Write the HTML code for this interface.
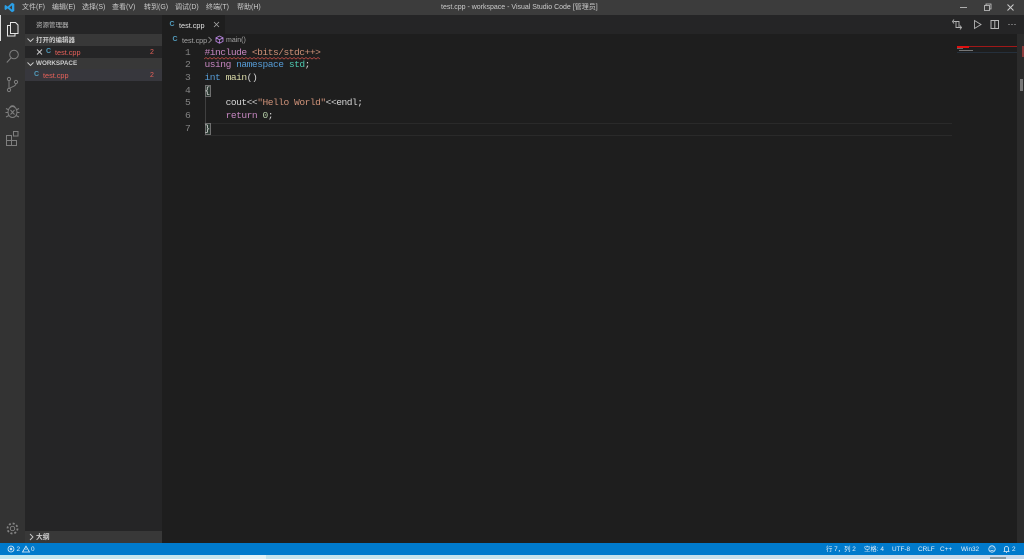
<!DOCTYPE html>
<html><head><meta charset="utf-8">
<style>
*{box-sizing:border-box}
html,body{margin:0;padding:0;width:1024px;height:559px;overflow:hidden;background:#1e1e1e;font-family:"Liberation Sans","Noto Sans CJK SC",sans-serif}
#w{position:absolute;left:0;top:0;width:1024px;height:559px;overflow:hidden;filter:blur(.35px)}
.a{position:absolute;white-space:nowrap}
.code{font-family:"Liberation Mono","DejaVu Sans Mono",monospace;font-size:9.6px;letter-spacing:-.49px;line-height:12.7px;color:#d4d4d4;left:204.5px}
.ln{font-family:"Liberation Mono",monospace;font-size:9.6px;letter-spacing:-.49px;line-height:12.7px;color:#858585;left:185px}
.menu{top:3px;font-size:7px;line-height:9px;color:#ccc}
.st{top:545px;font-size:6.4px;line-height:9px;color:#e4f0fa}
.ci{font-size:7px;line-height:10px;color:#519aba;font-weight:bold}
</style></head><body><div id="w">
<!-- title bar -->
<div class="a" style="left:0;top:0;width:1024px;height:15px;background:#3c3c3c"></div>
<svg class="a" style="left:4px;top:2px" width="11" height="11" viewBox="0 0 11 11"><path d="M8 .8 10.3 2v7L8 10.2 3.6 6.4 1.6 8 .6 7.4V3.6l1-.6 2 1.6zM8 3.4 5.4 5.500 8 7.600z" fill="#2b9fe6"/></svg>
<div class="a menu" style="left:22px">文件(F)</div>
<div class="a menu" style="left:52px">编辑(E)</div>
<div class="a menu" style="left:82px">选择(S)</div>
<div class="a menu" style="left:112px">查看(V)</div>
<div class="a menu" style="left:144px">转到(G)</div>
<div class="a menu" style="left:175px">调试(D)</div>
<div class="a menu" style="left:206px">终端(T)</div>
<div class="a menu" style="left:237px">帮助(H)</div>
<div class="a" style="left:441px;top:3px;font-size:7px;line-height:9px;color:#ccc">test.cpp - workspace - Visual Studio Code [管理员]</div>
<svg class="a" style="left:955px;top:0" width="69" height="15" viewBox="0 0 69 15" fill="none" stroke="#ccc" stroke-width=".8"><path d="M5 7.500h7"/><path d="M29.500 5.500h5v5h-5zM31 5.500V4h5v5h-1.500"/><path d="M52.500 4.500l6 6M58.500 4.500l-6 6" stroke-width="1"/></svg>
<!-- activity bar -->
<div class="a" style="left:0;top:15px;width:25px;height:528px;background:#333"></div>
<div class="a" style="left:0;top:15px;width:1px;height:26px;background:#ddd"></div>
<svg class="a" style="left:0;top:15px" width="25" height="140" viewBox="0 0 25 140" fill="none" stroke-width="1">
<g stroke="#e6e6e6"><path d="M10.500 7.500h5l2.500 2.500v8.500h-7.500z"/><path d="M10.500 10.500H7.500v10.500h7.500v-2.500"/></g>
<g stroke="#7f7f7f"><circle cx="14" cy="39.500" r="4.300"/><path d="M11 43 6.800 47.500"/>
<circle cx="9" cy="64" r="1.600"/><circle cx="9" cy="75" r="1.600"/><circle cx="16" cy="67" r="1.600"/><path d="M9 65.600v7.800M16 68.600c0 3-5 3-6.500 5"/>
<ellipse cx="12.500" cy="97" rx="4.500" ry="5.500"/><path d="M10 93c0-3 5-3 5 0M6 93.500l3 1.500M19 93.500l-3 1.500M5.500 97.500H8M19.500 97.500H17M6 102l3-1.500M19 102l-3-1.500M10.500 95l4 4.500M14.500 95l-4 4.500"/>
<path d="M6.500 120.500h5v5h-5zM6.500 125.500h5v5h-5zM11.500 125.500h5v5h-5zM13.500 116.500h4.500v4.500h-4.500z"/></g>
</svg>
<svg class="a" style="left:5px;top:521px" width="15" height="15" viewBox="0 0 15 15" fill="none" stroke="#858585"><circle cx="7.500" cy="7.500" r="2.200" stroke-width=".9"/><circle cx="7.500" cy="7.500" r="5" stroke-width="1.800" stroke-dasharray="2 1.930"/></svg>
<!-- sidebar -->
<div class="a" style="left:25px;top:15px;width:137px;height:528px;background:#252526"></div>
<div class="a" style="left:36px;top:21px;font-size:6.500px;line-height:9px;color:#bbb">资源管理器</div>
<div class="a" style="left:25px;top:34px;width:137px;height:12px;background:#383838"></div>
<div class="a" style="left:25px;top:58px;width:137px;height:11px;background:#383838"></div>
<div class="a" style="left:25px;top:69px;width:137px;height:12px;background:#37373d"></div>
<svg class="a" style="left:25px;top:34px" width="12" height="35" fill="none" stroke="#ccc" stroke-width=".9"><path d="M2.500 4.500 5.500 7.500 8.500 4.500M2.500 28.500 5.500 31.500 8.500 28.500"/></svg>
<div class="a" style="left:36px;top:35.500px;font-size:6.500px;line-height:9px;color:#ccc;font-weight:bold">打开的编辑器</div>
<div class="a" style="left:36px;top:59px;font-size:6.300px;line-height:9px;color:#ccc;font-weight:bold">WORKSPACE</div>
<svg class="a" style="left:36px;top:48px" width="8" height="8" stroke="#ccc" stroke-width=".9"><path d="M1 1.500 6 6.500M6 1.500 1 6.500"/></svg>
<div class="a ci" style="left:46px;top:47px">C</div>
<div class="a" style="left:55px;top:47.500px;font-size:7.300px;line-height:9px;color:#e8615a">test.cpp</div>
<div class="a" style="left:150px;top:47.500px;font-size:7px;line-height:9px;color:#e8615a">2</div>
<div class="a ci" style="left:34px;top:70px">C</div>
<div class="a" style="left:43px;top:71px;font-size:7.300px;line-height:9px;color:#e8615a">test.cpp</div>
<div class="a" style="left:150px;top:71px;font-size:7px;line-height:9px;color:#e8615a">2</div>
<div class="a" style="left:25px;top:531px;width:137px;height:12px;background:#383838"></div>
<svg class="a" style="left:28px;top:533px" width="7" height="8" fill="none" stroke="#ccc" stroke-width=".9"><path d="M2 1 5 4 2 7"/></svg>
<div class="a" style="left:36px;top:532.500px;font-size:6.800px;line-height:9px;color:#ccc;font-weight:bold">大纲</div>
<!-- tabs -->
<div class="a" style="left:162px;top:15px;width:862px;height:19px;background:#252526"></div>
<div class="a" style="left:162px;top:15px;width:63px;height:19px;background:#1e1e1e"></div>
<div class="a ci" style="left:169.500px;top:20px">C</div>
<div class="a" style="left:179px;top:20.500px;font-size:7.300px;line-height:9px;color:#e2e2e2">test.cpp</div>
<svg class="a" style="left:213px;top:21px" width="8" height="8" stroke="#a8a8a8" stroke-width=".8"><path d="M1 1 6 6M6 1 1 6"/></svg>
<svg class="a" style="left:950px;top:17px" width="70" height="15" viewBox="0 0 70 15" fill="none" stroke="#b5b5b5" stroke-width=".9">
<path d="M6 4v6.500h5M3.500 4.500H9V10M4 2.500l-1.500 2L4 6.500M10 12.500l1.500-2L10 8.500"/>
<path d="M24.500 3.500v8l6.500-4z"/>
<path d="M41 3.500h7.500v8H41zM44.800 3.500v8" stroke-width="1"/>
<path d="M58.500 7.500h1M61.500 7.500h1M64.500 7.500h1" stroke-width="1"/></svg>
<!-- breadcrumb -->
<div class="a ci" style="left:172.500px;top:35px">C</div>
<div class="a" style="left:182px;top:35.500px;font-size:7.200px;line-height:9px;color:#a5a5a5">test.cpp</div>
<svg class="a" style="left:207px;top:36px" width="6" height="8" fill="none" stroke="#999" stroke-width=".8"><path d="M1.500 1 4.500 4 1.500 7"/></svg>
<svg class="a" style="left:215px;top:35px" width="9" height="9" fill="none" stroke="#b180d7" stroke-width=".9"><path d="M4.500 1 8 2.800v3.600L4.500 8.200 1 6.400V2.800zM1 2.800l3.500 1.900 3.500-1.900M4.500 4.700v3.500"/></svg>
<div class="a" style="left:226px;top:35.500px;font-size:7px;line-height:9px;color:#a5a5a5">main()</div>
<!-- editor -->
<div class="a" style="left:204px;top:122.500px;width:748px;height:13px;border-top:1px solid #2a2a2a;border-bottom:1px solid #2a2a2a"></div>
<div class="a" style="left:204.500px;top:97px;width:1px;height:26px;background:#404040"></div>
<div class="a" style="left:204.500px;top:84.500px;width:6px;height:12.500px;border:1px solid #6f6f6f;background:#2c3a33"></div>
<div class="a" style="left:204.500px;top:122.500px;width:6px;height:12.500px;border:1px solid #6f6f6f;background:#2c3a33"></div>
<div class="a ln" style="top:46.500px">1</div>
<div class="a ln" style="top:59.200px">2</div>
<div class="a ln" style="top:71.900px">3</div>
<div class="a ln" style="top:84.600px">4</div>
<div class="a ln" style="top:97.300px">5</div>
<div class="a ln" style="top:110px">6</div>
<div class="a ln" style="top:122.700px">7</div>
<div class="a code" style="top:46.500px;color:#c586c0">#include <span style="color:#ce9178">&lt;bits/stdc++&gt;</span></div>
<svg class="a" style="left:204px;top:57px" width="118" height="3"><path d="M0 2 2 .5 4 2 6 .5 8 2 10 .5 12 2 14 .5 16 2 18 .5 20 2 22 .5 24 2 26 .5 28 2 30 .5 32 2 34 .5 36 2 38 .5 40 2 42 .5 44 2 46 .5 48 2 50 .5 52 2 54 .5 56 2 58 .5 60 2 62 .5 64 2 66 .5 68 2 70 .5 72 2 74 .5 76 2 78 .5 80 2 82 .5 84 2 86 .5 88 2 90 .5 92 2 94 .5 96 2 98 .5 100 2 102 .5 104 2 106 .5 108 2 110 .5 112 2 114 .5 116 2" fill="none" stroke="#c9514a" stroke-width=".7"/></svg>
<div class="a code" style="top:59.200px"><span style="color:#c586c0">using</span> <span style="color:#569cd6">namespace</span> <span style="color:#4ec9b0">std</span>;</div>
<div class="a code" style="top:71.900px"><span style="color:#569cd6">int</span> <span style="color:#dcdcaa">main</span>()</div>
<div class="a code" style="top:84.600px">{</div>
<div class="a code" style="top:97.300px">&nbsp;&nbsp;&nbsp;&nbsp;cout&lt;&lt;<span style="color:#ce9178">"Hello World"</span>&lt;&lt;endl;</div>
<div class="a code" style="top:110px">&nbsp;&nbsp;&nbsp;&nbsp;<span style="color:#c586c0">return</span> <span style="color:#b5cea8">0</span>;</div>
<div class="a code" style="top:122.700px">}</div>
<!-- minimap -->
<div class="a" style="left:957px;top:46px;width:60px;height:1px;background:#a01818"></div>
<div class="a" style="left:957px;top:46px;width:12px;height:1.500px;background:#e01010"></div>
<div class="a" style="left:957px;top:48px;width:6px;height:1px;background:#666"></div>
<div class="a" style="left:959px;top:50px;width:14px;height:1px;background:#777"></div>
<div class="a" style="left:957px;top:52px;width:60px;height:1px;background:#25303c"></div>
<div class="a" style="left:1017px;top:34px;width:7px;height:509px;background:#2b2b2b"></div>
<div class="a" style="left:1022px;top:46px;width:2px;height:11px;background:#8a3a3a"></div>
<div class="a" style="left:1020px;top:79px;width:3px;height:12px;background:#777"></div>
<!-- status bar -->
<div class="a" style="left:0;top:543px;width:1024px;height:12px;background:#007acc"></div>
<div class="a" style="left:0;top:555px;width:1024px;height:4px;background:linear-gradient(90deg,#c3e6ef,#c6e2ec 60%,#c8d8ea)"></div>
<div class="a" style="left:240px;top:555px;width:26px;height:4px;background:#e2f2f6"></div>
<div class="a" style="left:990px;top:557px;width:16px;height:2px;background:#8a9ba5"></div>
<svg class="a" style="left:7px;top:545px" width="28" height="9" fill="none" stroke="#e4f0fa" stroke-width=".8"><circle cx="4" cy="4" r="3"/><path d="M2.800 2.800l2.400 2.400M5.200 2.800 2.800 5.200"/><path d="M19 1.200 22.500 7h-7zM19 3.500v1.500"/></svg>
<div class="a st" style="left:16.500px">2</div>
<div class="a st" style="left:31px">0</div>
<div class="a st" style="left:826px">行 7，列 2</div>
<div class="a st" style="left:864px">空格: 4</div>
<div class="a st" style="left:892px">UTF-8</div>
<div class="a st" style="left:918px">CRLF</div>
<div class="a st" style="left:940px">C++</div>
<div class="a st" style="left:961px">Win32</div>
<svg class="a" style="left:988px;top:545px" width="26" height="9" fill="none" stroke="#e4f0fa" stroke-width=".8"><circle cx="4" cy="4" r="3.200"/><path d="M2.500 5c.8 1 2.200 1 3 0M2.500 3h1M4.500 3h1"/><path d="M16.500 6.500V3.500a2 2 0 0 1 4 0v3zM15.500 6.500h6M18 7.500h1"/></svg>
<div class="a st" style="left:1012px">2</div>
</div></body></html>
